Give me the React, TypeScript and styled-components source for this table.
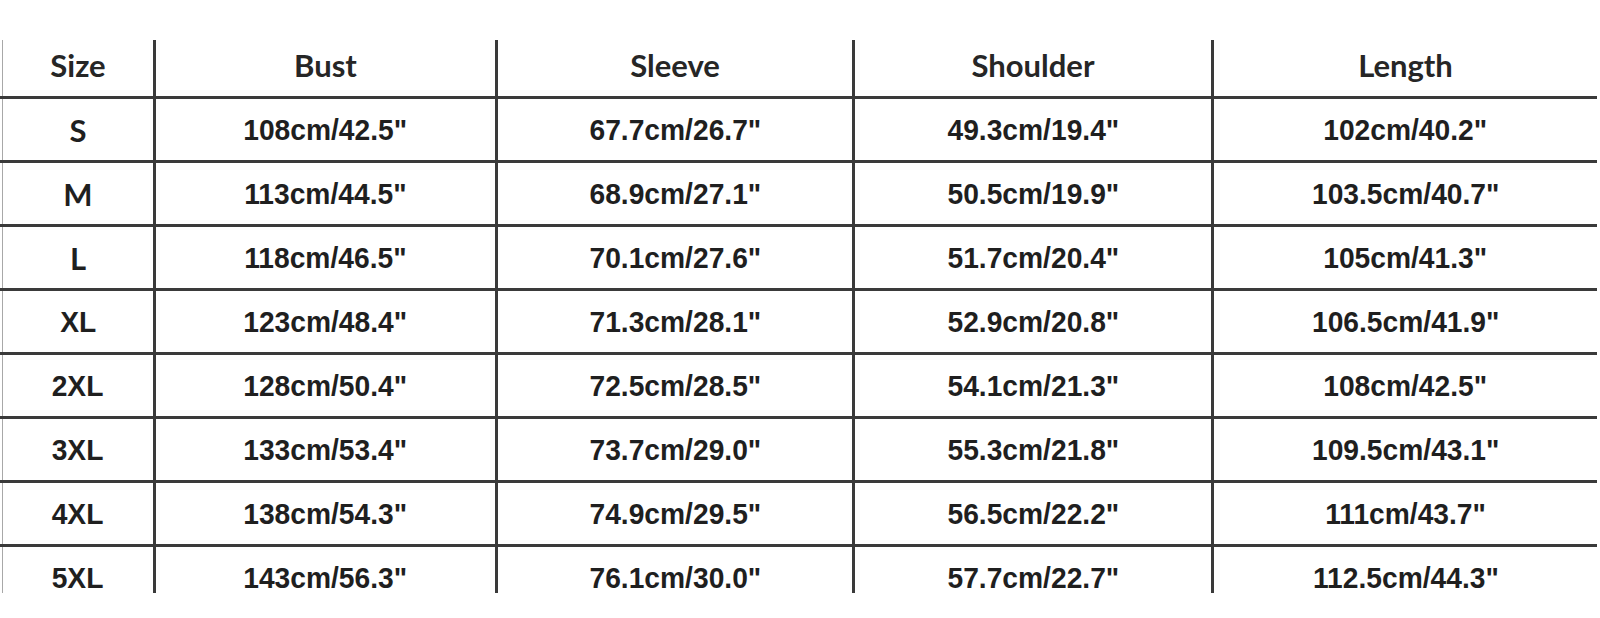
import React from "react";
import styled, { createGlobalStyle } from "styled-components";

const GlobalStyle = createGlobalStyle`
  html, body {
    margin: 0;
    padding: 0;
    background: #ffffff;
  }
`;

const Page = styled.div`
  width: 1600px;
  height: 618px;
  padding-top: 40px;
  box-sizing: border-box;
  background: #fff;
`;

const Chart = styled.div`
  width: 1597px;
`;

const Row = styled.div<{ $head?: boolean; $last?: boolean }>`
  display: grid;
  grid-template-columns: 151px 342px 357px 359px 1fr;
  padding-left: 2px;
  height: ${(p) => (p.$head ? "59px" : p.$last ? "43px" : "64px")};
  box-sizing: border-box;
  border-bottom: ${(p) => (p.$last ? "none" : "3px solid #3a3a3a")};
`;

const Cell = styled.div<{ $first?: boolean; $last?: boolean }>`
  display: flex;
  align-items: ${(p) => (p.$last ? "flex-start" : "center")};
  justify-content: center;
  border-left: ${(p) => (p.$first ? "1px solid #a8a8a8" : "3px solid #3a3a3a")};
  color: #1f1f1f;
`;

const HeadText = styled.span`
  font-family: Lato, "Open Sans", sans-serif;
  font-weight: 700;
  font-size: 31px;
  color: #262626;
  margin-bottom: 6px;
`;

const Value = styled.span<{ $soft?: boolean; $last?: boolean }>`
  font-family: ${(p) =>
    p.$soft ? 'Lato, "Open Sans", sans-serif' : '"Liberation Sans", Arial, sans-serif'};
  font-weight: 700;
  font-size: ${(p) => (p.$soft ? "31px" : "30px")};
  line-height: 30px;
  margin-top: ${(p) => (p.$last ? "16px" : "0")};
  display: inline-block;
  transform: ${(p) => (p.$soft ? "none" : "scaleX(0.94)")};
  white-space: nowrap;
`;

const headers = ["Size", "Bust", "Sleeve", "Shoulder", "Length"];

const rows: string[][] = [
  ["S", '108cm/42.5"', '67.7cm/26.7"', '49.3cm/19.4"', '102cm/40.2"'],
  ["M", '113cm/44.5"', '68.9cm/27.1"', '50.5cm/19.9"', '103.5cm/40.7"'],
  ["L", '118cm/46.5"', '70.1cm/27.6"', '51.7cm/20.4"', '105cm/41.3"'],
  ["XL", '123cm/48.4"', '71.3cm/28.1"', '52.9cm/20.8"', '106.5cm/41.9"'],
  ["2XL", '128cm/50.4"', '72.5cm/28.5"', '54.1cm/21.3"', '108cm/42.5"'],
  ["3XL", '133cm/53.4"', '73.7cm/29.0"', '55.3cm/21.8"', '109.5cm/43.1"'],
  ["4XL", '138cm/54.3"', '74.9cm/29.5"', '56.5cm/22.2"', '111cm/43.7"'],
  ["5XL", '143cm/56.3"', '76.1cm/30.0"', '57.7cm/22.7"', '112.5cm/44.3"'],
];

const softSizes = ["S", "M", "L"];

const App = () => {
  return (
    <Page>
      <GlobalStyle />
      <Chart>
        <Row $head>
          {headers.map((h, i) => (
            <Cell key={h} $first={i === 0}>
              <HeadText>{h}</HeadText>
            </Cell>
          ))}
        </Row>
        {rows.map((r, ri) => {
          const last = ri === rows.length - 1;
          return (
            <Row key={r[0]} $last={last}>
              {r.map((v, i) => (
                <Cell key={i} $first={i === 0} $last={last}>
                  <Value $soft={i === 0 && softSizes.includes(v)} $last={last}>
                    {v}
                  </Value>
                </Cell>
              ))}
            </Row>
          );
        })}
      </Chart>
    </Page>
  );
};

export default App;
